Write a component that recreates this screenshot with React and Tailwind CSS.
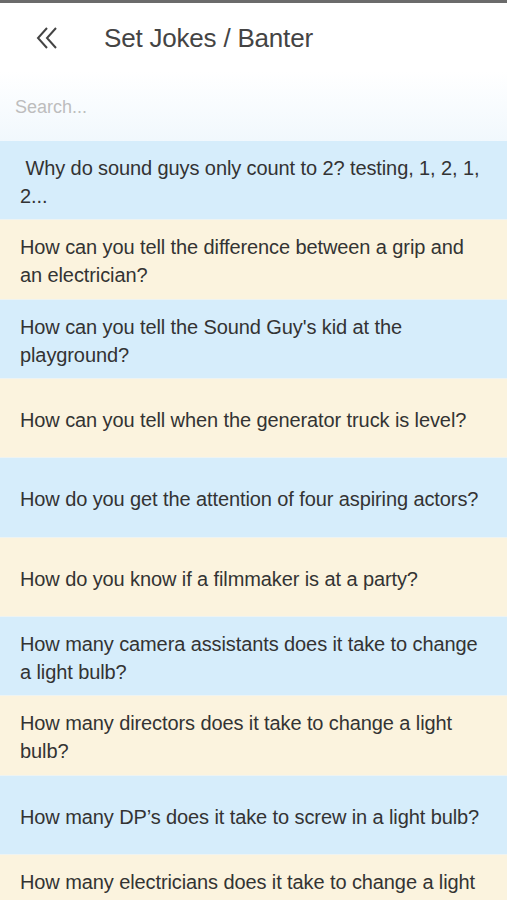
import React from 'react';

const jokes = [
  [' Why do sound guys only count to 2? testing, 1, 2, 1,', '2...'],
  ['How can you tell the difference between a grip and', 'an electrician?'],
  ["How can you tell the Sound Guy's kid at the", 'playground?'],
  ['How can you tell when the generator truck is level?'],
  ['How do you get the attention of four aspiring actors?'],
  ['How do you know if a filmmaker is at a party?'],
  ['How many camera assistants does it take to change', 'a light bulb?'],
  ['How many directors does it take to change a light', 'bulb?'],
  ['How many DP’s does it take to screw in a light bulb?'],
  ['How many electricians does it take to change a light', 'bulb?'],
];

function DoubleChevron() {
  return (
    <svg width="22" height="24" viewBox="0 0 22 24" fill="none" stroke="#444" strokeWidth="2">
      <path d="M11 2 L2 12 L11 22" />
      <path d="M20 2 L11 12 L20 22" />
    </svg>
  );
}

export default function App() {
  return (
    <div className="w-[507px] h-[900px] overflow-hidden bg-white font-['Liberation_Sans',Arial,sans-serif]">
      <div className="h-[3px] bg-[#6b6b6b]" />
      <div className="h-[68px] flex items-center">
        <div className="w-[104px] pl-[36px] pt-[2px]">
          <DoubleChevron />
        </div>
        <div className="text-[26px] text-[#444] tracking-[-0.2px] pt-[2px]">Set Jokes / Banter</div>
      </div>
      <div className="h-[70px] flex items-center px-[15px] bg-gradient-to-b from-white to-[#f1f8fd]">
        <span className="text-[18px] text-[#bdbdbd] pt-[3px]">Search...</span>
      </div>
      <div>
        {jokes.map((lines, i) => (
          <div
            key={i}
            className={
              'h-[79.33px] flex items-center px-[20px] border-b border-[#eef3f1] ' +
              (i % 2 === 0 ? 'bg-[#d6edfb]' : 'bg-[#fbf3de]')
            }
          >
            <p className="text-[20px] leading-[28px] text-[#333] tracking-[-0.1px] whitespace-pre pt-[4px]">
              {lines.map((l, k) => (
                <span key={k} className="block">{l}</span>
              ))}
            </p>
          </div>
        ))}
      </div>
    </div>
  );
}
